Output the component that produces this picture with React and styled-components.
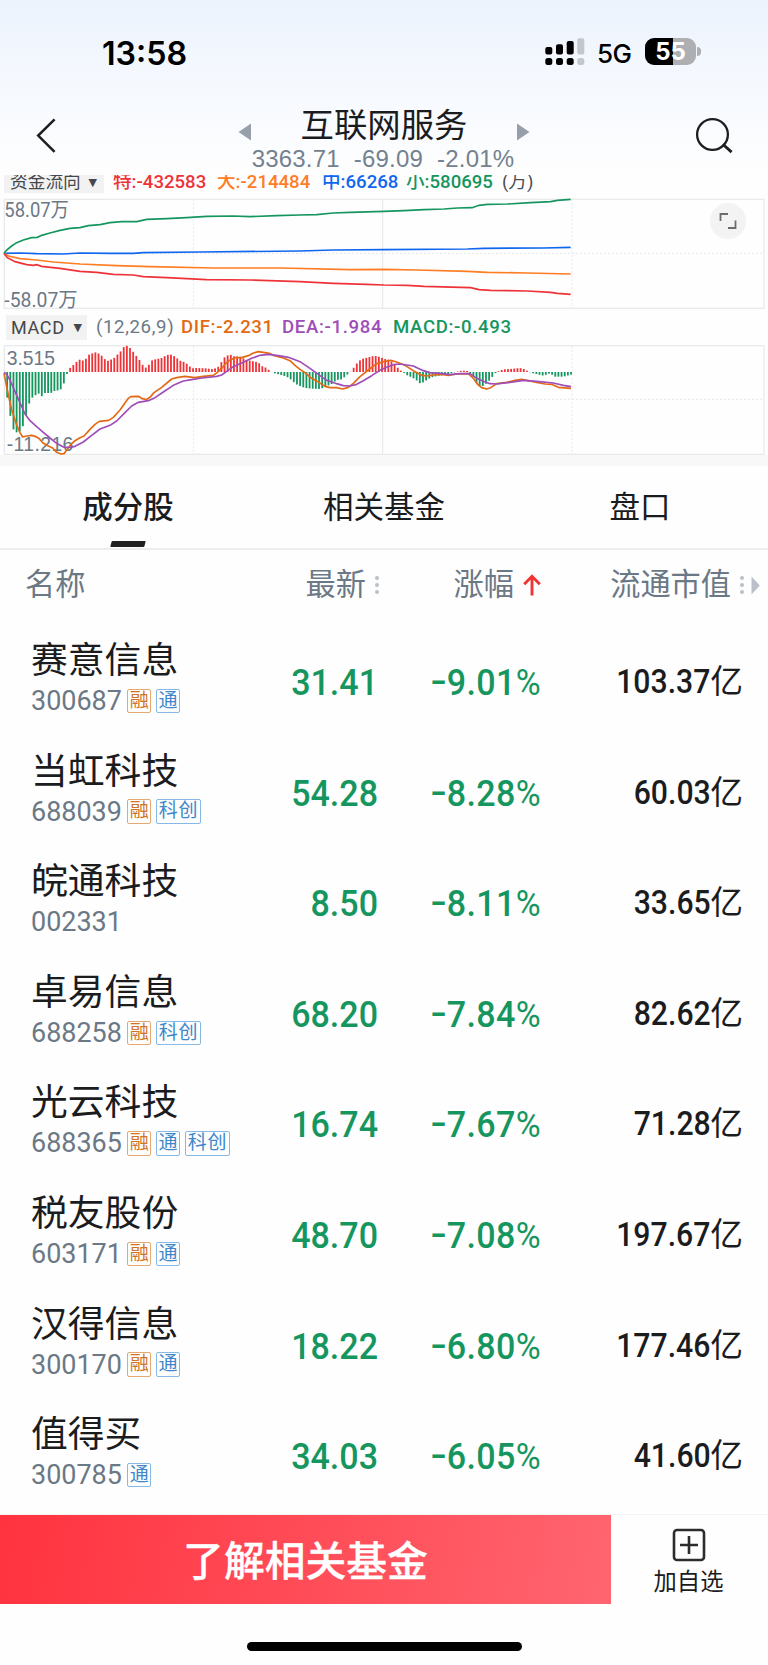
import styled, { createGlobalStyle } from "styled-components";

const GREEN = "#16965f";
const RED = "#ee3338";
const ORANGE = "#ff7d24";
const BLUE = "#1067ee";

const stocks = [
  { name: "赛意信息", code: "300687", tags: ["融", "通"], price: "31.41", change: "9.01", cap: "103.37" },
  { name: "当虹科技", code: "688039", tags: ["融", "科创"], price: "54.28", change: "8.28", cap: "60.03" },
  { name: "皖通科技", code: "002331", tags: [], price: "8.50", change: "8.11", cap: "33.65" },
  { name: "卓易信息", code: "688258", tags: ["融", "科创"], price: "68.20", change: "7.84", cap: "82.62" },
  { name: "光云科技", code: "688365", tags: ["融", "通", "科创"], price: "16.74", change: "7.67", cap: "71.28" },
  { name: "税友股份", code: "603171", tags: ["融", "通"], price: "48.70", change: "7.08", cap: "197.67" },
  { name: "汉得信息", code: "300170", tags: ["融", "通"], price: "18.22", change: "6.80", cap: "177.46" },
  { name: "值得买", code: "300785", tags: ["通"], price: "34.03", change: "6.05", cap: "41.60" },
];

// Chart points are in 3x units, the charts scale them down
const flowLines = [
  {
    color: BLUE,
    points:
      "12,265 60,264 110,266 190,267 240,264 330,265 400,265 430,263 600,261 900,258 1000,255 1152,254 1402,252 1452,250 1632,249 1712,247",
  },
  {
    color: ORANGE,
    points:
      "12,265 25,273 60,281 110,285 160,291 240,297 350,302 450,305 640,309 840,309 1050,314 1152,313 1252,315 1402,319 1462,322 1582,324 1712,327",
  },
  {
    color: RED,
    points:
      "12,265 22,278 45,290 80,299 100,301 110,299 125,304 180,310 240,319 290,322 340,328 400,330 430,335 500,338 620,344 750,345 900,350 1000,355 1100,358 1152,360 1222,361 1272,364 1382,367 1412,368 1437,374 1472,376 1582,378 1652,382 1672,385 1712,388",
  },
  {
    color: GREEN,
    points:
      "12,265 20,255 35,243 50,233 70,225 95,218 112,217 125,211 150,204 180,196 210,190 240,188 265,182 300,179 330,173 365,170 410,170 440,163 500,161 560,158 620,154 700,153 750,155 830,152 900,150 950,149 1000,144 1050,142 1152,139 1212,137 1272,134 1332,132 1372,129 1417,128 1437,121 1462,118 1522,117 1592,113 1652,110 1672,106 1712,103",
  },
];

const dif =
  "12,190 22,240 35,300 50,345 60,368 68,381 80,378 95,376 108,380 118,386 128,398 145,408 158,414 170,427 183,432 192,431 200,420 212,404 225,392 240,383 252,378 270,358 285,343 298,334 326,331 340,322 360,300 385,265 392,260 415,259 425,265 438,269 450,262 462,248 485,232 515,207 530,203 555,199 585,203 610,199 640,196 655,185 670,170 680,157 692,149 705,143 725,143 745,137 760,129 775,125 790,127 808,130 820,136 850,144 870,152 885,166 900,178 915,188 935,205 955,216 975,229 990,233 1010,233 1028,237 1045,232 1060,220 1080,200 1105,180 1130,161 1155,154 1172,151 1190,156 1215,166 1240,182 1265,196 1280,198 1300,195 1325,193 1345,196 1370,192 1405,191 1420,205 1432,222 1445,233 1460,237 1472,233 1490,221 1520,217 1545,211 1565,208 1585,212 1610,217 1635,222 1655,223 1675,232 1713,235";

const dea =
  "12,187 20,193 30,210 45,245 60,278 75,312 90,332 110,350 130,367 150,384 170,400 190,411 210,412 225,409 250,396 275,376 300,357 330,346 350,333 375,308 395,288 415,277 445,272 465,263 490,246 520,226 550,213 575,209 605,204 650,199 665,195 680,184 700,170 725,159 755,145 780,136 805,133 835,137 865,142 885,149 900,155 930,175 960,197 980,211 1010,221 1030,227 1050,228 1070,223 1090,212 1115,197 1140,181 1160,172 1180,164 1200,162 1240,168 1270,182 1290,188 1320,190 1350,194 1380,191 1410,191 1430,205 1450,214 1470,221 1490,222 1530,217 1570,211 1610,214 1660,219 1690,226 1713,230";

// [x, end of bar], bars in between are interpolated
const macdKeys = [
  [12, 190], [21, 260], [31, 318], [40, 358], [50, 367], [59, 365], [68, 351], [78, 318], [87, 282], [97, 263],
  [106, 256], [115, 250], [125, 259], [134, 249], [153, 249], [162, 243], [181, 240], [191, 222], [200, 194],
  [210, 174], [220, 165], [229, 156], [239, 149], [250, 152], [258, 146], [268, 133], [287, 127], [297, 131],
  [306, 138], [315, 148], [325, 153], [344, 143], [353, 133], [363, 123], [372, 110], [382, 107], [391, 115],
  [400, 126], [410, 139], [420, 152], [430, 168], [439, 174], [448, 163], [457, 150], [485, 144], [500, 135],
  [515, 134], [525, 140], [540, 152], [555, 157], [565, 165], [575, 175], [590, 174], [620, 175], [640, 178],
  [655, 170], [665, 155], [675, 140], [690, 133], [700, 139], [720, 140], [740, 150], [775, 157], [785, 168],
  [800, 174], [810, 183], [820, 189], [840, 194], [860, 200], [875, 210], [885, 220], [895, 226], [915, 234],
  [935, 236], [960, 237], [975, 231], [995, 222], [1010, 210], [1025, 208], [1035, 200], [1045, 191], [1050, 187],
  [1058, 178], [1065, 167], [1075, 155], [1085, 147], [1105, 142], [1123, 137], [1140, 141], [1155, 147],
  [1170, 150], [1180, 160], [1190, 170], [1200, 180], [1210, 187], [1220, 195], [1245, 207], [1260, 220],
  [1270, 217], [1285, 207], [1300, 200], [1320, 197], [1345, 192], [1360, 188], [1375, 184], [1385, 182],
  [1400, 182], [1410, 190], [1420, 200], [1430, 220], [1440, 230], [1450, 228], [1465, 215], [1475, 203],
  [1485, 190], [1495, 184], [1510, 178], [1530, 177], [1560, 174], [1575, 178], [1585, 185], [1600, 190],
  [1630, 197], [1650, 190], [1665, 200], [1690, 200], [1716, 193],
];

const ZERO = 186;

const macdBars = Array.from({ length: 180 }, (_, i) => {
  const x = 21.5 + i * 9.45;
  const k = Math.max(1, macdKeys.findIndex((p) => p[0] >= x));
  const [x0, y0] = macdKeys[k - 1];
  const [x1, y1] = macdKeys[k];
  return { x, y: y0 + ((y1 - y0) * (x - x0)) / (x1 - x0) };
});

const Grid = ({ top, middle, bottom }) => (
  <g fill="none" stroke="#e6e7e9" strokeWidth="3">
    <rect x="13" y={top} width="2279" height={bottom - top} stroke="#e9eaeb" strokeWidth="4" />
    <path d={`M1148 ${top}V${bottom}`} />
    <path
      d={`M12 ${middle}H2292M580 ${top}V${bottom}M1716 ${top}V${bottom}`}
      strokeDasharray="6 6"
    />
  </g>
);

const App = () => {
  return (
    <Page>
      <GlobalStyle />
      <Header>
        <StatusBar>
          <Time>13:58</Time>
          <StatusIcons>
            <svg width="40" height="27" viewBox="0 0 40 27">
              <rect x="0.3" y="9" width="7" height="7.5" rx="2" />
              <rect x="11" y="6.3" width="7" height="10.2" rx="2" />
              <rect x="21.7" y="3" width="7" height="13.5" rx="2" />
              <rect x="32.3" y="0.3" width="7" height="16.2" rx="2" fill="#c3c6ca" />
              <rect x="0.3" y="20" width="7" height="7" rx="2.5" />
              <rect x="11" y="20" width="7" height="7" rx="2.5" />
              <rect x="21.7" y="20" width="7" height="7" rx="2.5" />
              <rect x="32.3" y="20" width="7" height="7" rx="2.5" fill="#c3c6ca" />
            </svg>
            <Network>5G</Network>
            <Battery>
              <BatteryBody>55</BatteryBody>
              <BatteryTip />
            </Battery>
          </StatusIcons>
        </StatusBar>
        <NavBar>
          <svg width="22" height="36" viewBox="0 0 22 36">
            <path d="M19.6 2.4 3.2 18.6 19.6 34.8" fill="none" stroke="#1d1e20" strokeWidth="2.5" />
          </svg>
          <TitleBlock>
            <TitleRow>
              <svg width="13" height="18" viewBox="0 0 13 18">
                <path d="M13 0.5V17.5L0.5 9Z" fill="#97a0aa" />
              </svg>
              <Title>互联网服务</Title>
              <svg width="13" height="18" viewBox="0 0 13 18">
                <path d="M0 0.5V17.5L12.5 9Z" fill="#97a0aa" />
              </svg>
            </TitleRow>
            <Quote>
              <span>3363.71</span>
              <span>-69.09</span>
              <span>-2.01%</span>
            </Quote>
          </TitleBlock>
          <svg width="38" height="38" viewBox="0 0 38 38" fill="none" stroke="#1d1e20" strokeWidth="2.3">
            <circle cx="17.5" cy="17.5" r="15.4" />
            <path d="M27.8 27.3 36.6 35.1" strokeWidth="2.8" />
          </svg>
        </NavBar>
      </Header>

      <FlowLegend>
        <Picker $flow>
          资金流向 <small>▼</small>
        </Picker>
        <Legend $color={RED} $width={104}>特:-432583</Legend>
        <Legend $color={ORANGE} $width={105}>大:-214484</Legend>
        <Legend $color={BLUE} $width={84}>中:66268</Legend>
        <Legend $color={GREEN} $width={96}>小:580695</Legend>
        <Legend $color="#4c4f53" $light>(万)</Legend>
      </FlowLegend>
      <ChartBox>
        <svg width="768" height="114" viewBox="0 96 2304 342">
          <Grid top={103} middle={265} bottom={430} />
          <g fill="#6b7885" fontSize="61" fontFamily="Roboto, 'Noto Sans CJK SC', sans-serif">
            <text x="13" y="155" textLength="194" lengthAdjust="spacingAndGlyphs">58.07万</text>
            <text x="13" y="425" textLength="220" lengthAdjust="spacingAndGlyphs">-58.07万</text>
          </g>
          {flowLines.map((line) => (
            <polyline key={line.color} points={line.points} fill="none" stroke={line.color} strokeWidth="5" />
          ))}
        </svg>
        <ExpandButton>
          <svg width="18" height="18" viewBox="0 0 18 18" fill="none" stroke="#6c6c6c" strokeWidth="1.8">
            <path d="M1.5 9V2H9M16.5 8.5V16H9" />
          </svg>
        </ExpandButton>
      </ChartBox>

      <MacdLegend>
        <Picker>
          MACD <small>▼</small>
        </Picker>
        <Legend $color="#6b7885" $width={85} $light>(12,26,9)</Legend>
        <Legend $color="#e36a14" $width={101}>DIF:-2.231</Legend>
        <Legend $color="#9f4db8" $width={111}>DEA:-1.984</Legend>
        <Legend $color={GREEN}>MACD:-0.493</Legend>
      </MacdLegend>
      <ChartBox>
        <svg width="768" height="112" viewBox="0 99 2304 336">
          <Grid top={107} middle={268} bottom={433} />
          {macdBars.map((bar) => (
            <rect
              key={bar.x}
              x={bar.x - 2.7}
              y={Math.min(bar.y, ZERO)}
              width="5.4"
              height={Math.abs(bar.y - ZERO)}
              fill={bar.y < ZERO ? RED : GREEN}
            />
          ))}
          <g fill="#6b7885" fontSize="58" fontFamily="'Liberation Sans', Arial, sans-serif">
            <text x="20" y="165" textLength="145">3.515</text>
            <text x="20" y="423" textLength="200">-11.216</text>
          </g>
          <polyline points={dif} fill="none" stroke="#e36a14" strokeWidth="5" strokeLinejoin="round" />
          <polyline points={dea} fill="none" stroke="#9f4db8" strokeWidth="5" strokeLinejoin="round" />
        </svg>
      </ChartBox>
      <Divider />

      <Tabs>
        <Tab $active>成分股</Tab>
        <Tab>相关基金</Tab>
        <Tab>盘口</Tab>
      </Tabs>

      <TableHead>
        <HeadCell $left>名称</HeadCell>
        <HeadCell>
          最新 <SortDots />
        </HeadCell>
        <HeadCell>
          涨幅
          <svg width="18" height="22" viewBox="0 0 18 22" fill="none" stroke="#f13434" strokeWidth="2.9">
            <path d="M9 21.5V3M1.2 10.3 9 2.3 16.8 10.3" />
          </svg>
        </HeadCell>
        <HeadCell>
          流通市值 <SortDots />
          <MoreArrow width="9" height="19" viewBox="0 0 9 19">
            <path d="M0.5 0.5V18.5L8.8 9.5Z" fill="#b9c0c8" />
          </MoreArrow>
        </HeadCell>
      </TableHead>
      {stocks.map((stock) => (
        <StockRow key={stock.code}>
          <div>
            <StockName>{stock.name}</StockName>
            <StockMeta>
              <StockCode>{stock.code}</StockCode>
              {stock.tags.map((tag) => (
                <Tag key={tag} $orange={tag === "融"} $wide={tag.length > 1}>
                  {tag}
                </Tag>
              ))}
            </StockMeta>
          </div>
          <Price>{stock.price}</Price>
          <Change>
            <Minus>-</Minus>
            {stock.change}
            <Percent>%</Percent>
          </Change>
          <MarketCap>
            <b>{stock.cap}</b>亿
          </MarketCap>
        </StockRow>
      ))}

      <BottomBar>
        <FundButton>了解相关基金</FundButton>
        <AddButton>
          <svg width="34" height="34" viewBox="0 0 34 34" fill="none" stroke="#2b2c2e" strokeWidth="2.6">
            <rect x="2" y="2" width="30" height="30" rx="3" />
            <path d="M17 8V26M8 17H26" />
          </svg>
          加自选
        </AddButton>
      </BottomBar>
      <HomeIndicator />
    </Page>
  );
};

const GlobalStyle = createGlobalStyle`
  * {
    box-sizing: border-box;
  }
  body {
    margin: 0;
    background: #fefefe;
  }
  svg {
    display: block;
    flex-shrink: 0;
  }
`;

const Page = styled.div`
  width: 768px;
  height: 1665px;
  overflow: hidden;
  background: #fefefe;
  color: #1b1c1e;
  font-family: Roboto, "Noto Sans CJK SC", sans-serif;
  white-space: nowrap;
`;

const Header = styled.header`
  height: 175px;
  background: linear-gradient(180deg, #ecf3fd 0%, #f4f8fe 40%, #fefefe 100%);
`;

const StatusBar = styled.div`
  display: flex;
  justify-content: space-between;
  height: 104px;
  padding: 0 67px 0 102px;
  color: #000;
  font-family: Inter, sans-serif;
`;

const Time = styled.div`
  padding-top: 33px;
  font-size: 32.2px;
  font-weight: 600;
  line-height: 41px;
`;

const StatusIcons = styled.div`
  display: flex;
  padding-top: 38px;
`;

const Network = styled.div`
  width: 48px;
  margin-left: 12px;
  font-size: 26px;
  font-weight: 500;
  line-height: 31px;
  letter-spacing: -0.5px;
`;

const Battery = styled.div`
  display: flex;
  align-items: center;
  height: 27px;
`;

const BatteryBody = styled.div`
  width: 51px;
  height: 27px;
  border-radius: 9px;
  background: linear-gradient(90deg, #000 55%, #adafb2 55%);
  color: #fff;
  font-size: 24px;
  font-weight: 700;
  line-height: 27px;
  text-align: center;
`;

const BatteryTip = styled.div`
  width: 4px;
  height: 9px;
  margin-left: 1px;
  border-radius: 0 4px 4px 0;
  background: #adafb2;
`;

const NavBar = styled.nav`
  display: flex;
  justify-content: space-between;
  padding: 0 35px;

  > svg {
    margin-top: 13px;
  }
`;

const TitleBlock = styled.div`
  width: 292px;
  margin-left: 16px;
`;

const TitleRow = styled.div`
  display: flex;
  justify-content: space-between;
  height: 40px;

  svg {
    margin-top: 19px;
  }
`;

const Title = styled.h1`
  margin: 0;
  font-size: 33.4px;
  font-weight: 400;
  line-height: 43px;
`;

const Quote = styled.div`
  display: flex;
  justify-content: center;
  gap: 14px;
  margin-left: -2px;
  color: #74818e;
  font-family: "Liberation Sans", Arial, sans-serif;
  font-size: 24px;
  line-height: 29px;
  letter-spacing: 0.2px;
`;

const FlowLegend = styled.div`
  display: flex;
  align-items: flex-end;
  height: 22px;
  padding: 0 0 2px 4px;
  overflow: hidden;
`;

const MacdLegend = styled.div`
  display: flex;
  align-items: center;
  height: 33px;
  margin-bottom: -1px;
  padding-left: 6px;
  letter-spacing: 0.65px;
`;

const Picker = styled.div`
  display: flex;
  align-items: center;
  justify-content: space-between;
  width: ${(p) => (p.$flow ? 100 : 81)}px;
  height: 25px;
  padding: ${(p) => (p.$flow ? "4px 7px 0 6px" : "0 5px 0 5px")};
  margin: 0 9px ${(p) => (p.$flow ? 2 : 0)}px 0;
  flex-shrink: 0;
  background: #f2f2f2;
  color: #45484b;
  font-size: ${(p) => (p.$flow ? 17.7 : 18)}px;
  line-height: 25px;

  small {
    font-family: "DejaVu Sans", sans-serif;
    font-size: 11px;
    letter-spacing: 0;
  }
`;

const Legend = styled.div`
  width: ${(p) => (p.$width ? `${p.$width}px` : "auto")};
  flex-shrink: 0;
  color: ${(p) => p.$color};
  font-size: 18.6px;
  font-weight: ${(p) => (p.$light ? 400 : 500)};
  line-height: 25px;
`;

const ChartBox = styled.div`
  position: relative;
`;

const ExpandButton = styled.div`
  position: absolute;
  top: 6px;
  right: 22px;
  display: flex;
  align-items: center;
  justify-content: center;
  width: 36px;
  height: 36px;
  border-radius: 50%;
  background: #f3f3f3;
`;

const Divider = styled.div`
  height: 11px;
  background: #f8f8f8;
`;

const Tabs = styled.div`
  display: grid;
  grid-template-columns: repeat(3, 1fr);
  height: 84px;
  border-bottom: 2px solid #ededee;
`;

const Tab = styled.div`
  display: flex;
  flex-direction: column;
  align-items: center;
  font-size: 30.5px;
  font-weight: ${(p) => (p.$active ? 500 : 400)};
  line-height: 84px;

  &::after {
    content: "";
    width: 34px;
    height: 6px;
    margin-top: -9px;
    border-radius: 1px;
    background: ${(p) => (p.$active ? "#1f2022" : "transparent")};
    transform: skewX(-15deg);
  }
`;

const TableHead = styled.div`
  display: grid;
  grid-template-columns: 230px 149px 162px 219px;
  height: 77px;
  color: #6b7885;
  font-size: 30.2px;
  line-height: 68px;
`;

const HeadCell = styled.div`
  display: flex;
  align-items: center;
  justify-content: ${(p) => (p.$left ? "flex-start" : "flex-end")};
  gap: 9px;
  height: 70px;
  padding-left: ${(p) => (p.$left ? 25 : 0)}px;
`;

const SortDots = styled.span`
  width: 4px;
  height: 4px;
  border-radius: 50%;
  background: #b9c0c8;
  box-shadow: 0 -7px #b9c0c8, 0 7px #b9c0c8;
`;

const MoreArrow = styled.svg`
  margin-left: -2px;
`;

const StockRow = styled.div`
  display: grid;
  grid-template-columns: 199px 148px 163px 202px;
  height: 110.6px;
  padding: 9px 25px 0 31px;
`;

const StockName = styled.div`
  height: 44px;
  font-size: 36.8px;
  line-height: 50px;
`;

const StockMeta = styled.div`
  display: flex;
  align-items: center;
  gap: 4.5px;
  height: 42px;
`;

const StockCode = styled.div`
  width: 91.5px;
  color: #6b7885;
  font-size: 28.5px;
  line-height: 42px;
  transform: scaleX(0.945);
  transform-origin: left;
`;

const Tag = styled.span`
  height: 24.5px;
  padding: 0 ${(p) => (p.$wide ? 1.9 : 1.7)}px;
  border: 1.5px solid ${(p) => (p.$orange ? "#e5a871" : "#86b9e6")};
  border-radius: 2px;
  color: ${(p) => (p.$orange ? "#cf7426" : "#3d87ca")};
  font-size: 19px;
  line-height: 22px;
  letter-spacing: ${(p) => (p.$wide ? "0.8px" : "0")};
`;

const Price = styled.div`
  color: ${GREEN};
  font-size: 37px;
  font-weight: 500;
  line-height: 93px;
  text-align: right;
  transform: scaleX(0.92);
  transform-origin: right;
`;

const Change = styled(Price)`
  letter-spacing: 0.4px;
`;

const Minus = styled.span`
  display: inline-block;
  transform: translateY(-1px) scaleX(1.4);
  transform-origin: right;
`;

const Percent = styled.span`
  font-weight: 400;
`;

const MarketCap = styled.div`
  display: flex;
  justify-content: flex-end;
  font-size: 32.8px;
  line-height: 93px;

  b {
    font-weight: 500;
    transform: scaleX(0.92);
    transform-origin: right;
  }
`;

const BottomBar = styled.footer`
  display: flex;
  height: 90px;
  margin-top: 2px;
  border-top: 1px solid #f3f3f4;
`;

const FundButton = styled.div`
  width: 611px;
  background: linear-gradient(100deg, #ff333f 0%, #ff6570 100%);
  color: #fff;
  font-size: 40.8px;
  font-weight: 500;
  line-height: 94px;
  text-align: center;
  height: 89px;
  -webkit-text-stroke: 0.3px #fff;
`;

const AddButton = styled.div`
  display: flex;
  flex: 1;
  flex-direction: column;
  align-items: center;
  padding: 13px 2px 0 0;
  font-size: 23.3px;
  line-height: 40px;
`;

const HomeIndicator = styled.div`
  width: 275px;
  height: 9px;
  margin: 38px auto 0;
  border-radius: 5px;
  background: #000;
`;

export default App;
